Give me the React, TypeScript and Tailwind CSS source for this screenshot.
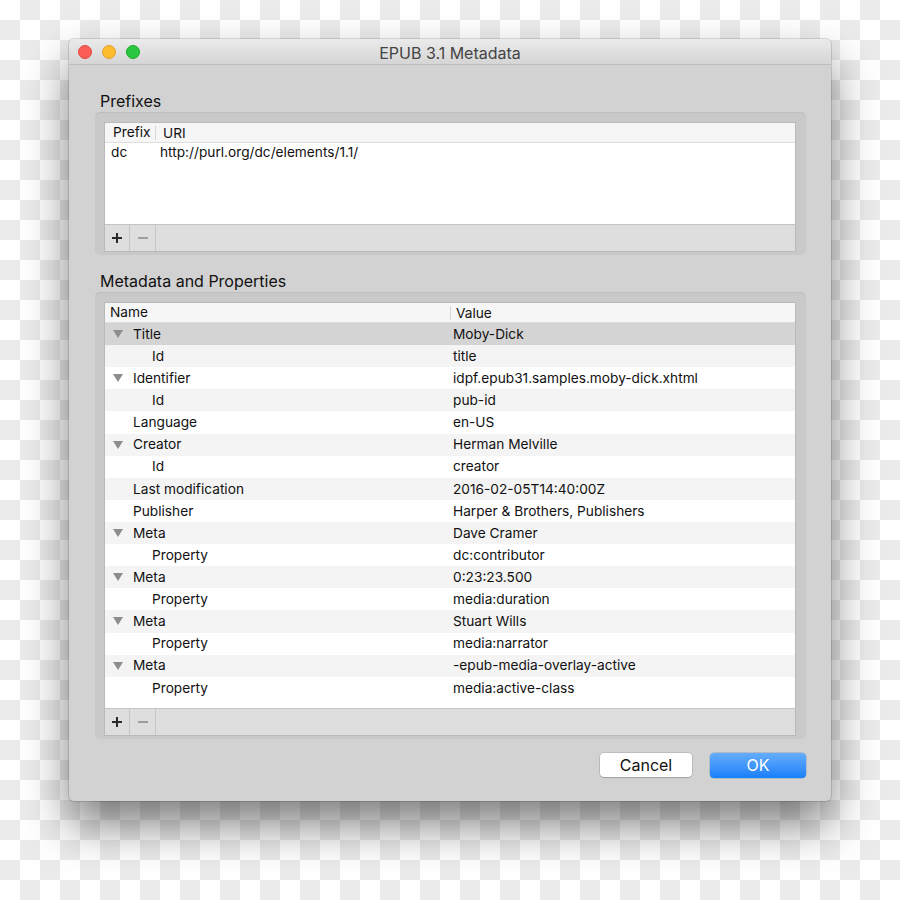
import React from "react";

const FONT = "font-['Inter','Liberation_Sans',sans-serif]";

type MetaRow = { name: string; value: string; level: 0 | 1; open?: boolean };

const ROWS: MetaRow[] = [
  { name: "Title", value: "Moby-Dick", level: 0, open: true },
  { name: "Id", value: "title", level: 1 },
  { name: "Identifier", value: "idpf.epub31.samples.moby-dick.xhtml", level: 0, open: true },
  { name: "Id", value: "pub-id", level: 1 },
  { name: "Language", value: "en-US", level: 0 },
  { name: "Creator", value: "Herman Melville", level: 0, open: true },
  { name: "Id", value: "creator", level: 1 },
  { name: "Last modification", value: "2016-02-05T14:40:00Z", level: 0 },
  { name: "Publisher", value: "Harper & Brothers, Publishers", level: 0 },
  { name: "Meta", value: "Dave Cramer", level: 0, open: true },
  { name: "Property", value: "dc:contributor", level: 1 },
  { name: "Meta", value: "0:23:23.500", level: 0, open: true },
  { name: "Property", value: "media:duration", level: 1 },
  { name: "Meta", value: "Stuart Wills", level: 0, open: true },
  { name: "Property", value: "media:narrator", level: 1 },
  { name: "Meta", value: "-epub-media-overlay-active", level: 0, open: true },
  { name: "Property", value: "media:active-class", level: 1 },
];

export default function App() {
  return (
    <div
      className={`h-[900px] w-[900px] overflow-hidden bg-[conic-gradient(#ebebeb_25%,#fff_0_50%,#ebebeb_0_75%,#fff_0)] bg-[length:40px_40px] pl-[69px] pt-[39px] ${FONT}`}
    >
      <Window />
    </div>
  );
}

/* -------------------- Window -------------------- */

function Window() {
  return (
    <div className="flex h-[762px] w-[762px] flex-col overflow-hidden rounded-[5px] bg-[#d2d2d2] shadow-[0_0_0_1px_rgba(0,0,0,0.12),0_24px_45px_rgba(0,0,0,0.5)]">
      <TitleBar />
      <div className="flex flex-1 flex-col pl-[26px] pr-[25px] pt-[26px]">
        <p className="pl-[5px] text-[16px] leading-[20px] text-[#111]">Prefixes</p>
        <GroupBox>
          <PrefixTable />
        </GroupBox>

        <p className="mt-[16px] pl-[5px] text-[16px] leading-[20px] text-[#111]">
          Metadata and Properties
        </p>
        <GroupBox>
          <MetadataTable />
        </GroupBox>

        <div className="mt-[14px] flex justify-end gap-[18px]">
          <button className="h-[24px] w-[92px] rounded-[4px] bg-white text-[16px] leading-[24px] text-[#111] shadow-[0_0_0_0.5px_rgba(0,0,0,0.2),0_1px_1px_rgba(0,0,0,0.15)]">
            Cancel
          </button>
          <button className="h-[25px] w-[96px] rounded-[4px] bg-gradient-to-b from-[#65adfa] to-[#137ffa] text-[16px] leading-[25px] text-white shadow-[0_0_0_0.5px_rgba(0,60,160,0.3)]">
            OK
          </button>
        </div>
      </div>
    </div>
  );
}

function TitleBar() {
  return (
    <div className="relative flex h-[26px] items-center justify-center border-b border-[#bdbdbd] bg-gradient-to-b from-[#ebebeb] to-[#d5d5d5] pt-[2px]">
      <div className="absolute left-[9px] top-[6px] flex gap-[10px]">
        <span className="h-[14px] w-[14px] rounded-full border border-[#e2463f] bg-[#fc5f57]" />
        <span className="h-[14px] w-[14px] rounded-full border border-[#e1a12a] bg-[#fdbc2e]" />
        <span className="h-[14px] w-[14px] rounded-full border border-[#1aab29] bg-[#2ac840]" />
      </div>
      <span className="text-[16px] leading-[20px] text-[#444]">EPUB 3.1 Metadata</span>
    </div>
  );
}

function GroupBox({ children }: { children: React.ReactNode }) {
  return (
    <div className="mt-[1px] rounded-[5px] bg-[#c9c9c9] pb-[3px] pl-[9px] pr-[10px] pt-[10px] shadow-[inset_0_1px_1px_rgba(0,0,0,0.06)]">
      <div className="border border-[#b9b9b9] bg-white">{children}</div>
    </div>
  );
}

function BottomBar() {
  return (
    <div className="flex h-[27px] border-t border-[#c4c4c4] bg-[#dedede] text-[#333]">
      <button className="flex w-[25px] items-center justify-center border-r border-[#c6c6c6]">
        <svg viewBox="0 0 10 10" className="h-[10px] w-[10px]">
          <path d="M5 0v10M0 5h10" stroke="#2a2a2a" strokeWidth={2} />
        </svg>
      </button>
      <button className="flex w-[26px] items-center justify-center border-r border-[#c6c6c6]">
        <svg viewBox="0 0 10 10" className="h-[10px] w-[10px]">
          <path d="M0 5h10" stroke="#8a8a8a" strokeWidth={1.6} />
        </svg>
      </button>
    </div>
  );
}

/* -------------------- Prefix table -------------------- */

function PrefixTable() {
  return (
    <div className="text-[13.7px] text-[#111]">
      <div className="flex h-[20px] items-center border-b border-[#dedede] bg-[#f6f6f6]">
        <span className="w-[50px] pl-[8px]">Prefix</span>
        <span className="h-[14px] border-l border-[#d6d6d6] pl-[7px] leading-[14px]">URI</span>
      </div>
      <div className="h-[81px]">
        <div className="flex h-[18px] items-center">
          <span className="w-[50px] pl-[6px]">dc</span>
          <span className="pl-[5px]">http://purl.org/dc/elements/1.1/</span>
        </div>
      </div>
      <BottomBar />
    </div>
  );
}

/* -------------------- Metadata table -------------------- */

function Triangle() {
  return (
    <svg viewBox="0 0 10 8" className="h-[8px] w-[10px]">
      <polygon points="0,0 10,0 5,8" fill="#8d8d8d" />
    </svg>
  );
}

function MetadataTable() {
  return (
    <div className="text-[13.7px] text-[#111]">
      <div className="flex h-[20px] items-center border-b border-[#dedede] bg-[#f6f6f6]">
        <span className="w-[345px] pl-[5px]">Name</span>
        <span className="h-[14px] border-l border-[#d6d6d6] pl-[5px] leading-[14px]">Value</span>
      </div>
      <div className="h-[385px]">
        {ROWS.map((r, i) => (
          <div
            key={i}
            className={`flex h-[22.12px] items-center ${
              i === 0 ? "bg-[#d4d4d4]" : i % 2 === 1 ? "bg-[#f4f4f4]" : "bg-white"
            }`}
          >
            <div className="flex w-[348px] items-center">
              <span className="flex w-[28px] justify-center pr-[2px]">
                {r.open ? <Triangle /> : null}
              </span>
              <span className={r.level === 1 ? "pl-[19px]" : ""}>{r.name}</span>
            </div>
            <span>{r.value}</span>
          </div>
        ))}
      </div>
      <BottomBar />
    </div>
  );
}
